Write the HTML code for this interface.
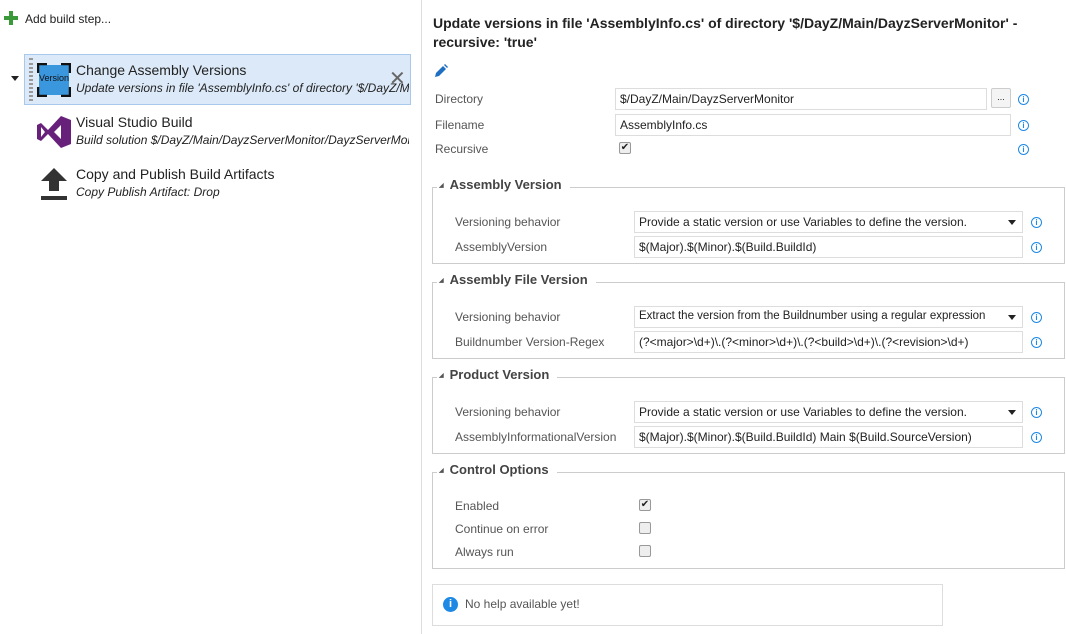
<!DOCTYPE html>
<html><head><meta charset="utf-8"><style>
*{box-sizing:border-box;margin:0;padding:0}
body{width:1066px;height:634px;background:#fff;font-family:"Liberation Sans",sans-serif;font-size:12px;color:#222;position:relative;overflow:hidden}
.a{position:absolute;white-space:nowrap}
.lbl{color:#555;font-size:12px}
.inp{position:absolute;height:22px;border:1px solid #ddd;background:#fff;padding:3px 4px;font-size:12px;color:#222;white-space:nowrap;overflow:hidden}
.info{position:absolute;width:11px;height:11px;border:1.3px solid #1e88e5;border-radius:50%;font-size:8px;color:#1e88e5;text-align:center;line-height:9px;font-weight:bold}
.fs{position:absolute;left:432px;width:633px;border:1px solid #ccc}
.leg{position:absolute;left:437px;background:#fff;padding:0 8px 0 2px;font-weight:bold;font-size:13px;color:#444}
.leg:before{content:"◢";font-size:6px;color:#555;margin-right:6px;vertical-align:2px}
.cb{position:absolute;width:12px;height:12px;border:1px solid #999;border-radius:2px;background:#eee;font-size:10px;line-height:10px;text-align:center;color:#222}
.arr{position:absolute;right:6px;top:8px;width:0;height:0;border-left:4px solid transparent;border-right:4px solid transparent;border-top:5px solid #222}
</style></head><body>
<div class="a" style="left:0;top:0;width:422px;height:634px;border-right:1px solid #ddd"></div>
<svg class="a" style="left:4px;top:11px" width="14" height="14"><rect x="5" y="0" width="4" height="14" fill="#3a9a3a"/><rect x="0" y="5" width="14" height="4" fill="#3a9a3a"/></svg>
<div class="a" style="left:25px;top:12px;font-size:12px">Add build step...</div>

<div class="a" style="left:24px;top:54px;width:387px;height:51px;background:#dce9f8;border:1px solid #a8c8ec"></div>
<div class="a" style="left:29px;top:58px;width:4px;height:43px;border-left:2px dotted #999;border-right:2px dotted #999"></div>
<div class="a" style="left:11px;top:76px;border-left:4px solid transparent;border-right:4px solid transparent;border-top:5px solid #222"></div>
<svg class="a" style="left:37px;top:63px" width="34" height="34" viewBox="0 0 34 34"><rect x="2" y="2" width="30" height="30" fill="#3a96dd"/><path d="M1 10V1H10M24 1H33V10M33 24V33H24M10 33H1V24" fill="none" stroke="#111" stroke-width="2.5"/></svg>
<div class="a" style="left:37px;top:73px;width:34px;text-align:center;font-size:9px;color:#111">Version</div>
<div class="a" style="left:76px;top:62px;font-size:14px;color:#222">Change Assembly Versions</div>
<div class="a" style="left:76px;top:81px;font-size:12px;font-style:italic;width:333px;overflow:hidden">Update versions in file 'AssemblyInfo.cs' of directory '$/DayZ/Main</div>
<div class="a" style="left:389px;top:66px;font-size:20px;color:#666">✕</div>

<svg class="a" style="left:37px;top:116px" width="34" height="32" viewBox="0 0 34 32"><path d="M0 9 L4 7 L11 14 L24 0 L34 4 L34 28 L24 32 L11 18 L4 25 L0 23Z M4 11 L4 21 L8 16Z M24 9 L24 23 L17 16Z" fill="#68217a" fill-rule="evenodd"/></svg>
<div class="a" style="left:76px;top:114px;font-size:14px">Visual Studio Build</div>
<div class="a" style="left:76px;top:133px;font-size:12px;font-style:italic;width:333px;overflow:hidden">Build solution $/DayZ/Main/DayzServerMonitor/DayzServerMon</div>

<svg class="a" style="left:41px;top:168px" width="26" height="32" viewBox="0 0 26 32"><path d="M13 0 L26 13 L18 13 L18 23 L8 23 L8 13 L0 13Z" fill="#333"/><rect x="0" y="28" width="26" height="4" fill="#333"/></svg>
<div class="a" style="left:76px;top:166px;font-size:14px">Copy and Publish Build Artifacts</div>
<div class="a" style="left:76px;top:185px;font-size:12px;font-style:italic">Copy Publish Artifact: Drop</div>

<div class="a" style="left:433px;top:14px;font-size:14px;font-weight:bold;line-height:19px;white-space:normal;width:610px">Update versions in file 'AssemblyInfo.cs' of directory '$/DayZ/Main/DayzServerMonitor' - recursive: 'true'</div>
<svg class="a" style="left:434px;top:64px" width="14" height="14" viewBox="0 0 14 14"><path d="M1 13L2 9L9 2L12 5L5 12Z" fill="#1e6fc4"/><path d="M10 1L11 0L14 3L13 4Z" fill="#1e6fc4"/></svg>

<div class="a lbl" style="left:435px;top:92px">Directory</div>
<div class="inp" style="left:615px;top:88px;width:372px">$/DayZ/Main/DayzServerMonitor</div>
<div class="a" style="left:991px;top:88px;width:20px;height:20px;border:1px solid #ccc;border-radius:2px;background:#f4f4f4;font-size:9px;text-align:center;line-height:16px">...</div>
<div class="info" style="left:1018px;top:94px">i</div>
<div class="a lbl" style="left:435px;top:118px">Filename</div>
<div class="inp" style="left:615px;top:114px;width:396px">AssemblyInfo.cs</div>
<div class="info" style="left:1018px;top:120px">i</div>
<div class="a lbl" style="left:435px;top:142px">Recursive</div>
<div class="cb" style="left:619px;top:142px">✔</div>
<div class="info" style="left:1018px;top:144px">i</div>

<div class="fs" style="top:187px;height:77px"></div>
<div class="a leg" style="top:177px">Assembly Version</div>
<div class="a lbl" style="left:455px;top:215px">Versioning behavior</div>
<div class="inp" style="left:634px;top:211px;width:389px">Provide a static version or use Variables to define the version.<span class="arr"></span></div>
<div class="info" style="left:1031px;top:217px">i</div>
<div class="a lbl" style="left:455px;top:240px">AssemblyVersion</div>
<div class="inp" style="left:634px;top:236px;width:389px">$(Major).$(Minor).$(Build.BuildId)</div>
<div class="info" style="left:1031px;top:242px">i</div>

<div class="fs" style="top:282px;height:77px"></div>
<div class="a leg" style="top:272px">Assembly File Version</div>
<div class="a lbl" style="left:455px;top:310px">Versioning behavior</div>
<div class="inp" style="left:634px;top:306px;width:389px;font-size:11.5px">Extract the version from the Buildnumber using a regular expression<span class="arr" style="background:#fff;box-shadow:-6px 0 0 6px #fff"></span></div>
<div class="info" style="left:1031px;top:312px">i</div>
<div class="a lbl" style="left:455px;top:335px">Buildnumber Version-Regex</div>
<div class="inp" style="left:634px;top:331px;width:389px">(?&lt;major&gt;\d+)\.(?&lt;minor&gt;\d+)\.(?&lt;build&gt;\d+)\.(?&lt;revision&gt;\d+)</div>
<div class="info" style="left:1031px;top:337px">i</div>

<div class="fs" style="top:377px;height:77px"></div>
<div class="a leg" style="top:367px">Product Version</div>
<div class="a lbl" style="left:455px;top:405px">Versioning behavior</div>
<div class="inp" style="left:634px;top:401px;width:389px">Provide a static version or use Variables to define the version.<span class="arr"></span></div>
<div class="info" style="left:1031px;top:407px">i</div>
<div class="a lbl" style="left:455px;top:430px">AssemblyInformationalVersion</div>
<div class="inp" style="left:634px;top:426px;width:389px">$(Major).$(Minor).$(Build.BuildId) Main $(Build.SourceVersion)</div>
<div class="info" style="left:1031px;top:432px">i</div>

<div class="fs" style="top:472px;height:97px"></div>
<div class="a leg" style="top:462px">Control Options</div>
<div class="a lbl" style="left:455px;top:499px">Enabled</div>
<div class="cb" style="left:639px;top:499px">✔</div>
<div class="a lbl" style="left:455px;top:522px">Continue on error</div>
<div class="cb" style="left:639px;top:522px"></div>
<div class="a lbl" style="left:455px;top:545px">Always run</div>
<div class="cb" style="left:639px;top:545px"></div>

<div class="a" style="left:432px;top:584px;width:511px;height:42px;border:1px solid #ddd"></div>
<div class="a" style="left:443px;top:597px;width:15px;height:15px;border-radius:50%;background:#1e88e5;color:#fff;font-size:11px;font-weight:bold;text-align:center;line-height:15px">i</div>
<div class="a lbl" style="left:465px;top:597px">No help available yet!</div>
</body></html>
